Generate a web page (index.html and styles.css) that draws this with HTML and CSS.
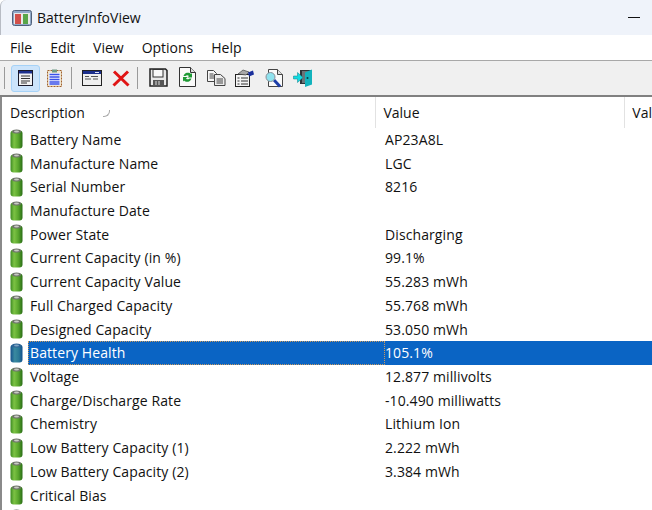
FILE: index.html
```html
<!DOCTYPE html>
<html lang="en">
    <head>
        <meta charset="UTF-8">
        <title>BatteryInfoView</title>
        <link rel="stylesheet" href="styles.css">
    </head>

    <body>
        <svg class="defs" width="0" height="0">
            <defs>
                <linearGradient id="green" x1="0" x2="1" y1="0" y2="0">
                    <stop offset="0" stop-color="#3c8a22"/>
                    <stop offset="0.3" stop-color="#7cc244"/>
                    <stop offset="0.65" stop-color="#58a62c"/>
                    <stop offset="1" stop-color="#2a6d16"/>
                </linearGradient>
                <linearGradient id="blue" x1="0" x2="1" y1="0" y2="0">
                    <stop offset="0" stop-color="#14508c"/>
                    <stop offset="0.35" stop-color="#3a8aa0"/>
                    <stop offset="0.7" stop-color="#2a7896"/>
                    <stop offset="1" stop-color="#12508e"/>
                </linearGradient>
                <symbol id="battery" viewBox="0 0 13 20">
                    <rect x="0.5" y="1.500" width="12" height="18" rx="3" fill="url(#green)"/>
                    <ellipse cx="6.500" cy="2.500" rx="4.500" ry="2" fill="#6f746b"/>
                    <ellipse cx="6.500" cy="2.500" rx="2.500" ry="1" fill="#c8cac4"/>
                </symbol>
                <symbol id="battery-sel" viewBox="0 0 13 20">
                    <rect x="0.500" y="1.500" width="12" height="18" rx="3" fill="url(#blue)"/>
                    <ellipse cx="6.500" cy="2.500" rx="4.500" ry="2" fill="#2f6496"/>
                    <ellipse cx="6.500" cy="2.500" rx="2.500" ry="1" fill="#7fa7c4"/>
                </symbol>
            </defs>
        </svg>

        <div class="titlebar">
            <svg class="app-icon" viewBox="0 0 20 16" width="20" height="16">
                <rect x="0.500" y="0.500" width="19" height="15" rx="2" fill="#8fa8c8" stroke="#50607a"/>
                <rect x="2" y="3" width="16" height="11" fill="#e8e8e8"/>
                <rect x="3" y="4" width="6" height="10" fill="#d2504a"/>
                <rect x="11" y="4" width="5" height="10" fill="#58a648"/>
            </svg>
            <span class="app-title">BatteryInfoView</span>
            <span class="minimize"></span>
        </div>

        <div class="menubar">
            <span>File</span>
            <span>Edit</span>
            <span>View</span>
            <span>Options</span>
            <span>Help</span>
        </div>

        <div class="toolbar">
            <span class="sep first"></span>
            <span class="tool active">
                <svg viewBox="0 0 15 16" width="15" height="16">
                    <rect x="0.500" y="0.500" width="14" height="15" fill="#f2f2f2" stroke="#1a1a2a"/>
                    <rect x="1" y="1" width="13" height="2.500" fill="#1c2f8c"/>
                    <path d="M3 6h9M3 8.500h9M3 11h9M3 13h6" stroke="#333" fill="none"/>
                </svg>
            </span>
            <span class="tool">
                <svg viewBox="0 0 15 18" width="15" height="18">
                    <rect x="0.500" y="1.500" width="14" height="16" fill="#f0e6d0" stroke="#a0602c" stroke-dasharray="2 1"/>
                    <rect x="2" y="4" width="11" height="12" fill="#f4f4ff"/>
                    <path d="M2.500 5.500h10M2.500 8h10M2.500 10.500h10M2.500 13h10M2.500 15h10" stroke="#3a50e8" fill="none" stroke-width="1.300"/>
                    <rect x="5" y="0.500" width="5" height="3" fill="#6f9a86"/>
                </svg>
            </span>
            <span class="sep"></span>
            <span class="tool">
                <svg viewBox="0 0 20 16" width="20" height="16">
                    <rect x="0.500" y="0.500" width="19" height="15" fill="#efefef" stroke="#222"/>
                    <rect x="1" y="1" width="18" height="3" fill="#1c2f8c"/>
                    <path d="M13 2.500h4" stroke="#dfe3f5" fill="none"/>
                    <path d="M3 6.500h4M9 6.500h7M3 9h6M11 9h5" stroke="#555" fill="none"/>
                </svg>
            </span>
            <span class="tool">
                <svg viewBox="0 0 18 17" width="18" height="17">
                    <path d="M2 1.500l14.500 14M16 1.500L1.500 15.500" stroke="#e01414" stroke-width="3" fill="none"/>
                </svg>
            </span>
            <span class="sep"></span>
            <span class="tool">
                <svg class="up" viewBox="0 0 19 19" width="19" height="19">
                    <path d="M1 1h15.500L18 2.500V18H1z" fill="#e8e8e8" stroke="#222" stroke-width="1.500"/>
                    <rect x="4" y="1.500" width="10" height="7.500" fill="#f8f8f8" stroke="#333"/>
                    <rect x="4" y="12" width="11" height="6" fill="#555"/>
                    <path d="M7 13v4M10 13v4" stroke="#ddd" fill="none"/>
                </svg>
            </span>
            <span class="tool">
                <svg class="up" viewBox="0 0 17 20" width="17" height="20">
                    <path d="M0.500 0.500h11l5 5v14H0.500z" fill="#fafafa" stroke="#333"/>
                    <path d="M11.500 0.500v5h5" fill="#ddd" stroke="#333"/>
                    <path d="M4.500 9a4.500 4.500 0 0 1 7.500-2l1-1v4.500H8.500l1.500-1.500a2.500 2.500 0 0 0-3.500 0z" fill="#1f9a35"/>
                    <path d="M12.500 11.500a4.500 4.500 0 0 1-7.500 2l-1 1V10h4.500L7 11.500a2.500 2.500 0 0 0 3.500 0z" fill="#1f9a35"/>
                </svg>
            </span>
            <span class="tool">
                <svg viewBox="0 0 19 16" width="19" height="16">
                    <path d="M0.500 0.500h6l3 3v8h-9z" fill="#f6f6f6" stroke="#444"/>
                    <path d="M2.500 4h4M2.500 6h5M2.500 8h5" stroke="#444" fill="none"/>
                    <path d="M7.500 4.500h6l4.500 4v7h-10.500z" fill="#ececec" stroke="#444"/>
                    <path d="M9.500 9h6.500M9.500 11h6.500M9.500 13h6.500" stroke="#444" fill="none"/>
                </svg>
            </span>
            <span class="tool">
                <svg viewBox="0 0 20 18" width="20" height="18">
                    <rect x="0.500" y="5.500" width="14" height="12" fill="#f4f4f4" stroke="#222"/>
                    <path d="M2.500 9h2M6 9h7M2.500 12h2M6 12h7M2.500 15h2M6 15h7" stroke="#333" fill="none"/>
                    <path d="M3 5l5-4 6 2-3 3z" fill="#a8a8a8" stroke="#444" stroke-width="0.700"/>
                    <path d="M13 3.500l5-2 1 4-5 2z" fill="#1a2f9c"/>
                </svg>
            </span>
            <span class="tool">
                <svg viewBox="0 0 18 19" width="18" height="19">
                    <path d="M3.500 0.500h9l5 5v12h-14z" fill="#fafafa" stroke="#444"/>
                    <path d="M12.500 0.500v5h5" fill="#ddd" stroke="#444"/>
                    <path d="M9 11l6 6.500" stroke="#1c3ea8" stroke-width="3" fill="none"/>
                    <circle cx="5.500" cy="8" r="4.500" fill="#8fe2ee" stroke="#8b8f98"/>
                </svg>
            </span>
            <span class="tool">
                <svg viewBox="0 0 20 18" width="20" height="18">
                    <path d="M7 1h12v14H7z" fill="#2c3438"/>
                    <path d="M9 2h8v12H9z" fill="#6a7478"/>
                    <path d="M12 3.500l7-3v15L12 18z" fill="#12b3bd"/>
                    <path d="M0.500 7h4V3.500L10 8.500 4.500 13.500V10h-4z" fill="#14dbe0" stroke="#0d7d88" stroke-width="0.500"/>
                    <circle cx="14.500" cy="9" r="1" fill="#063f48"/>
                </svg>
            </span>
        </div>

        <div class="list">
            <div class="list-head">
                <div class="col-desc">Description <span class="sort-mark"></span></div>
                <div class="col-value">Value</div>
                <div class="col-rest">Val</div>
            </div>
            <div class="row"><svg class="batt"><use href="#battery"/></svg><span class="cell-desc">Battery Name</span><span class="cell-value">AP23A8L</span></div>
            <div class="row"><svg class="batt"><use href="#battery"/></svg><span class="cell-desc">Manufacture Name</span><span class="cell-value">LGC</span></div>
            <div class="row"><svg class="batt"><use href="#battery"/></svg><span class="cell-desc">Serial Number</span><span class="cell-value">8216</span></div>
            <div class="row"><svg class="batt"><use href="#battery"/></svg><span class="cell-desc">Manufacture Date</span><span class="cell-value"></span></div>
            <div class="row"><svg class="batt"><use href="#battery"/></svg><span class="cell-desc">Power State</span><span class="cell-value">Discharging</span></div>
            <div class="row"><svg class="batt"><use href="#battery"/></svg><span class="cell-desc">Current Capacity (in %)</span><span class="cell-value">99.1%</span></div>
            <div class="row"><svg class="batt"><use href="#battery"/></svg><span class="cell-desc">Current Capacity Value</span><span class="cell-value">55.283 mWh</span></div>
            <div class="row"><svg class="batt"><use href="#battery"/></svg><span class="cell-desc">Full Charged Capacity</span><span class="cell-value">55.768 mWh</span></div>
            <div class="row"><svg class="batt"><use href="#battery"/></svg><span class="cell-desc">Designed Capacity</span><span class="cell-value">53.050 mWh</span></div>
            <div class="row selected"><svg class="batt"><use href="#battery-sel"/></svg><span class="cell-desc">Battery Health</span><span class="cell-value">105.1%</span></div>
            <div class="row"><svg class="batt"><use href="#battery"/></svg><span class="cell-desc">Voltage</span><span class="cell-value">12.877 millivolts</span></div>
            <div class="row"><svg class="batt"><use href="#battery"/></svg><span class="cell-desc">Charge/Discharge Rate</span><span class="cell-value">-10.490 milliwatts</span></div>
            <div class="row"><svg class="batt"><use href="#battery"/></svg><span class="cell-desc">Chemistry</span><span class="cell-value">Lithium Ion</span></div>
            <div class="row"><svg class="batt"><use href="#battery"/></svg><span class="cell-desc">Low Battery Capacity (1)</span><span class="cell-value">2.222 mWh</span></div>
            <div class="row"><svg class="batt"><use href="#battery"/></svg><span class="cell-desc">Low Battery Capacity (2)</span><span class="cell-value">3.384 mWh</span></div>
            <div class="row"><svg class="batt"><use href="#battery"/></svg><span class="cell-desc">Critical Bias</span><span class="cell-value"></span></div>
            <div class="row"><svg class="batt"><use href="#battery"/></svg><span class="cell-desc"></span><span class="cell-value"></span></div>
        </div>
    </body>
</html>
```

FILE: styles.css
```css
html, body{
    margin: 0;
    height: 510px;
    overflow: hidden;
}
body{
    background-color: #fff;
    font-family: "Open Sans", "Noto Sans", sans-serif;
    font-size: 14px;
    color: #111;
    display: flex;
    flex-direction: column;
}
.defs{
    display: block;
    height: 0;
}
.titlebar{
    background-color: #eff3fa;
    height: 35px;
    flex: none;
    display: flex;
    align-items: center;
    padding-left: 11px;
    padding-right: 12px;
    border-left: 1px solid #b8bcc4;
    border-top-left-radius: 6px;
}
.app-icon{
    margin-right: 5px;
}
.app-title{
    flex: 1;
}
.minimize{
    width: 12px;
    height: 1px;
    background-color: #111;
    margin-bottom: 1px;
}
.menubar{
    background-color: #fff;
    height: 25px;
    flex: none;
    display: flex;
    align-items: center;
    gap: 18px;
    padding-left: 10px;
}
.toolbar{
    background-color: #f0f0f0;
    border-top: 1px solid #a8a8a8;
    border-bottom: 2px solid #808080;
    height: 34px;
    flex: none;
    display: flex;
    align-items: center;
}
.tool{
    width: 28.8px;
    height: 27px;
    box-sizing: border-box;
    display: flex;
    align-items: center;
    justify-content: center;
}
.tool .up{
    margin-top: -2px;
}
.tool.active{
    background-color: #cce4fb;
    border: 1px solid #a6d2f7;
    border-radius: 3px;
}
.sep{
    width: 1px;
    height: 22px;
    background-color: #9a9a9a;
    margin: 0 6px 0 2px;
}
.sep.first{
    margin: 0 6px 0 4px;
}
.list{
    flex: 1;
    overflow: hidden;
    border-left: 2px solid #8a8a8a;
    background-color: #fff;
}
.list-head{
    height: 30.5px;
    display: flex;
    align-items: center;
}
.col-desc{
    width: 376px;
    box-sizing: border-box;
    padding-left: 8px;
    height: 100%;
    display: flex;
    align-items: center;
    border-right: 1px solid #e2e2e2;
}
.sort-mark{
    width: 6px;
    height: 6px;
    margin-left: 18px;
    margin-top: 2px;
    border-right: 1px solid #aaa;
    border-bottom: 1px solid #aaa;
    border-bottom-right-radius: 6px;
}
.col-value{
    width: 250px;
    box-sizing: border-box;
    padding-left: 7px;
    height: 100%;
    display: flex;
    align-items: center;
    border-right: 1px solid #e2e2e2;
}
.col-rest{
    padding-left: 7px;
}
.row{
    height: 23.73px;
    display: flex;
    align-items: center;
    letter-spacing: 0.1px;
}
.batt{
    width: 13px;
    height: 20px;
    flex: none;
    margin-left: 8px;
    margin-right: 5px;
}
.cell-desc{
    width: 357px;
    flex: none;
    box-sizing: border-box;
    padding-left: 2px;
}
.cell-value{
    flex: 1;
}
.row.selected{
    color: #fff;
}
.row.selected .cell-desc{
    background-color: #0a64c4;
    height: 100%;
    display: flex;
    align-items: center;
    outline: 1px dotted #c89a60;
    outline-offset: -1px;
}
.row.selected .cell-value{
    background-color: #0a64c4;
    height: 100%;
    display: flex;
    align-items: center;
}
```
